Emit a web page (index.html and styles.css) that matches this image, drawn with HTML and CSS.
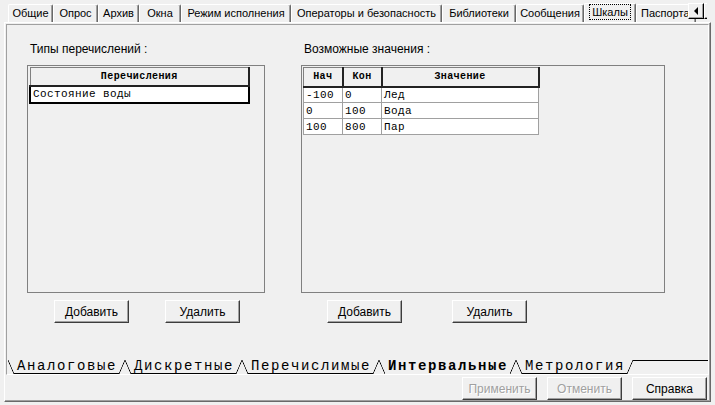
FILE: index.html
```html
<!DOCTYPE html>
<html lang="ru">
<head>
    <meta charset="UTF-8">
    <title>Шкалы</title>
    <link rel="stylesheet" href="styles.css">
</head>
<body>
    <div class="dialog">
        <div class="tabstrip">
            <span class="tab">Общие</span>
            <span class="tab">Опрос</span>
            <span class="tab">Архив</span>
            <span class="tab">Окна</span>
            <span class="tab">Режим исполнения</span>
            <span class="tab">Операторы и безопасность</span>
            <span class="tab">Библиотеки</span>
            <span class="tab">Сообщения</span>
            <span class="tab active"><span class="focus">Шкалы</span></span>
            <span class="tab">Паспорта</span>
            <div class="spin">
                <span class="spin-btn"><i class="arr-left"></i></span>
                <span class="spin-btn"><i class="arr-right"></i></span>
            </div>
        </div>
        <div class="page">
            <div class="inner">
                <div class="groups">
                    <div class="group left">
                        <div class="caption">Типы перечислений :</div>
                        <div class="box">
                            <table class="grid list">
                                <tr><th>Перечисления</th></tr>
                                <tr class="selected"><td>Состояние воды</td></tr>
                            </table>
                        </div>
                        <div class="actions">
                            <button class="btn">Добавить</button>
                            <button class="btn">Удалить</button>
                        </div>
                    </div>
                    <div class="group right">
                        <div class="caption">Возможные значения :</div>
                        <div class="box">
                            <table class="grid values">
                                <tr><th class="c-from">Нач</th><th class="c-to">Кон</th><th class="c-name">Значение</th></tr>
                                <tr><td>-100</td><td>0</td><td>Лед</td></tr>
                                <tr><td>0</td><td>100</td><td>Вода</td></tr>
                                <tr><td>100</td><td>800</td><td>Пар</td></tr>
                            </table>
                        </div>
                        <div class="actions">
                            <button class="btn">Добавить</button>
                            <button class="btn">Удалить</button>
                        </div>
                    </div>
                </div>
                <div class="tabset">
                    <span class="stab">Аналоговые</span>
                    <span class="stab">Дискретные</span>
                    <span class="stab">Перечислимые</span>
                    <span class="stab current">Интервальные</span>
                    <span class="stab">Метрология</span>
                    <span class="tabset-rest"></span>
                </div>
            </div>
            <div class="footer">
                <button class="btn" disabled>Применить</button>
                <button class="btn" disabled>Отменить</button>
                <button class="btn">Справка</button>
            </div>
        </div>
    </div>
</body>
</html>
```

FILE: styles.css
```css
* { box-sizing: border-box; }
body { margin: 0; width: 715px; height: 405px; overflow: hidden; background: #f0f0f0; color: #000; font-family: "Liberation Sans", Arial, sans-serif; font-size: 12px; }
.dialog { width: 715px; height: 405px; padding: 0 4px; }

/* top page control */
.tabstrip { position: relative; display: flex; align-items: flex-end; height: 22px; padding-left: 4px; white-space: nowrap; font-size: 11px; }
.tab { height: 18px; line-height: 16px; text-align: center; flex: none; border: 1px solid; border-bottom: none; border-color: #fff #696969 transparent #fff; box-shadow: inset -1px 0 #a0a0a0; border-radius: 2px 2px 0 0; overflow: hidden; }
.tab:nth-child(1) { width: 45px; }
.tab:nth-child(2) { width: 45px; }
.tab:nth-child(3) { width: 41px; }
.tab:nth-child(4) { width: 42px; }
.tab:nth-child(5) { width: 110px; }
.tab:nth-child(6) { width: 151px; }
.tab:nth-child(7) { width: 74px; }
.tab:nth-child(8) { width: 68px; }
.tab:nth-child(9) { width: 52px; }
.tab:nth-child(10) { width: 60px; text-align: left; padding-left: 4px; }
.tab.active { height: 19px; }
.focus { display: inline-block; line-height: 14px; padding: 0 2px; border: 1px dotted #000; }
/* scroll buttons, the right one is clipped by the control edge */
.spin { position: absolute; top: 3px; left: 684px; width: 19px; overflow: hidden; display: flex; }
.spin-btn { width: 16px; height: 16px; flex: none; display: flex; align-items: center; justify-content: center; background: #f0f0f0; border: 1px solid; border-color: #fff #000 #000 #fff; box-shadow: inset -1px -1px #a0a0a0; }
.arr-left { width: 0; height: 0; border-top: 4px solid transparent; border-bottom: 4px solid transparent; border-right: 4px solid #000; }
.arr-right { width: 0; height: 0; border-top: 4px solid transparent; border-bottom: 4px solid transparent; border-left: 4px solid #000; }

.page { height: 380px; border: 1px solid; border-color: #fff #696969 #696969 #fff; box-shadow: inset -1px -1px #a0a0a0; }
.inner { height: 351px; margin: 1px 1px 0 1px; border: 1px solid; border-color: #a0a0a0 #fff #fff #a0a0a0; }

.groups { display: flex; padding: 16px 0 0 20px; }
.group.right { margin-left: 36px; }
.caption { height: 16px; line-height: 16px; padding-left: 3px; }
.box { height: 228px; margin-top: 8px; padding: 1px; border: 1px solid #808080; }
.left .box { width: 238px; }
.right .box { width: 364px; }

/* string grids */
.grid { border-collapse: collapse; font-family: "Liberation Mono", "Courier New", monospace; font-size: 11px; letter-spacing: 0.4px; }
.grid th { height: 19px; padding: 0; font-size: 10px; font-weight: bold; background: #f0f0f0; border-top: 1px solid #808080; border-left: 1px solid #808080; border-right: 2px solid #222; border-bottom: 2px solid #222; }
.grid td { height: 16px; padding: 0 0 0 2px; background: #fff; border: 1px solid #a0a0a0; white-space: pre; text-align: left; }
.list th { width: 219px; height: 18px; }
.list .selected td { height: 17px; border: 2px solid #000; }
.c-from { width: 39px; }
.c-to { width: 39px; }
.c-name { width: 157px; }

.actions { display: flex; margin-top: 7px; }
.left .actions { padding-left: 27px; gap: 36px; }
.right .actions { padding-left: 26px; gap: 50px; }

.btn { width: 75px; height: 23px; padding: 0; font-family: "Liberation Sans", Arial, sans-serif; font-size: 12px; color: #000; background: #f0f0f0; border: 1px solid; border-color: #fff #3c3c3c #3c3c3c #fff; box-shadow: inset -1px -1px #a0a0a0; }
.btn:disabled { color: #a0a0a0; text-shadow: 1px 1px #fff; }

/* bottom tab set */
.tabset { display: flex; height: 14px; margin-top: 37px; padding-left: 1px; }
.stab { position: relative; height: 14px; padding: 0 8px 0 9px; line-height: 13px; font-family: "Liberation Mono", "Courier New", monospace; font-size: 14px; letter-spacing: 1.6px; white-space: nowrap; background: linear-gradient(#000, #000) center bottom / calc(100% - 12px) 1px no-repeat; }
.stab::before, .stab::after { content: ''; position: absolute; top: 0; width: 6px; height: 14px; }
.stab::before { left: 0; background: linear-gradient(to top right, transparent calc(50% - 0.7px), #000 50%, transparent calc(50% + 0.7px)); }
.stab::after { right: 0; background: linear-gradient(to bottom right, transparent calc(50% - 0.7px), #000 50%, transparent calc(50% + 0.7px)); }
.stab.current { font-weight: bold; background: none; z-index: 1; }
.tabset-rest { flex: 1; border-top: 1px solid #000; }

.footer { display: flex; justify-content: flex-end; gap: 10px; margin-top: 2px; padding-right: 3px; }
```
